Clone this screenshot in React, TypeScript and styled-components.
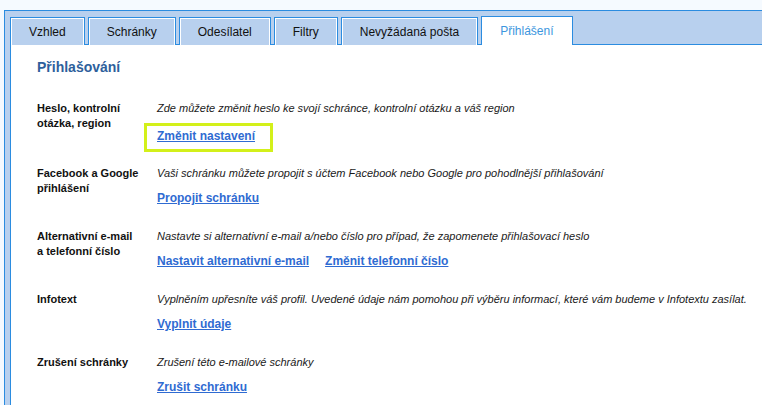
import React from "react";
import styled, { createGlobalStyle } from "styled-components";

const Global = createGlobalStyle`
  html, body { margin: 0; padding: 0; }
  body {
    background: #f5faff;
    font-family: Arial, "Liberation Sans", sans-serif;
    overflow: hidden;
  }
`;

const BLUE = "#2b8ce0";
const LIGHT = "#b8d0ee";

const Page = styled.div`
  padding: 10px 0 0 4px;
  height: 405px;
  box-sizing: border-box;
`;

const Frame = styled.div`
  border-top: 1px solid ${BLUE};
  border-left: 1px solid ${BLUE};
  background: ${LIGHT};
  padding: 5px 0 0 5px;
  height: 100%;
  box-sizing: border-box;
  display: flex;
  flex-direction: column;
`;

const TabBar = styled.div`
  display: flex;
  gap: 3px;
  align-items: flex-end;
  position: relative;
  z-index: 1;
  margin-bottom: -1px;
`;

const Tab = styled.div<{ $active?: boolean }>`
  height: 28px;
  box-sizing: border-box;
  padding: 0 18px;
  border: 1px solid ${BLUE};
  border-bottom: none;
  display: flex;
  align-items: center;
  font-size: 12px;
  color: ${(p) => (p.$active ? "#3c96de" : "#111")};
  background: ${(p) => (p.$active ? "#fff" : LIGHT)};
  box-shadow: ${(p) => (p.$active ? "none" : "inset 1px 1px 0 #fff, inset -1px 0 0 #fff")};
  white-space: nowrap;
  ${(p) => (p.$active ? "height: 29px; padding-bottom: 1px;" : "")}
`;

const Content = styled.div`
  flex: 1;
  background: #fff;
  border-top: 1px solid ${BLUE};
  border-left: 1px solid ${BLUE};
  padding: 14px 0 0 26px;
`;

const Heading = styled.h2`
  margin: 0 0 25px;
  font-size: 14px;
  line-height: 17px;
  font-weight: bold;
  color: #2e5f9c;
`;

const Row = styled.div<{ $gap: number }>`
  display: grid;
  grid-template-columns: 120px 1fr;
  margin-bottom: ${(p) => p.$gap}px;
`;

const Label = styled.div`
  font-size: 11px;
  line-height: 14.5px;
  font-weight: bold;
  color: #111;
`;

const Desc = styled.div`
  font-size: 11px;
  line-height: 14px;
  font-style: italic;
  color: #1a1a1a;
  white-space: nowrap;
`;

const Links = styled.div<{ $top: number }>`
  margin-top: ${(p) => p.$top}px;
  display: flex;
  gap: 16px;
  line-height: 16px;
`;

const Link = styled.a`
  font-size: 12px;
  font-weight: bold;
  color: #2f6bd2;
  text-decoration: underline;
  cursor: pointer;
`;

const Highlight = styled.span`
  position: relative;
  display: inline-block;
  &::after {
    content: "";
    position: absolute;
    left: -13px;
    right: -18px;
    top: -4px;
    bottom: -8px;
    border: 3px solid #d3f01a;
    pointer-events: none;
  }
`;

const tabs = ["Vzhled", "Schránky", "Odesílatel", "Filtry", "Nevyžádaná pošta", "Přihlášení"];

type Item = { label: string[]; desc: string; links: string[]; highlight?: boolean };

const items: Item[] = [
  {
    label: ["Heslo, kontrolní", "otázka, region"],
    desc: "Zde můžete změnit heslo ke svojí schránce, kontrolní otázku a váš region",
    links: ["Změnit nastavení"],
    highlight: true,
  },
  {
    label: ["Facebook a Google", "přihlášení"],
    desc: "Vaši schránku můžete propojit s účtem Facebook nebo Google pro pohodlnější přihlašování",
    links: ["Propojit schránku"],
  },
  {
    label: ["Alternativní e-mail", "a telefonní číslo"],
    desc: "Nastavte si alternativní e-mail a/nebo číslo pro případ, že zapomenete přihlašovací heslo",
    links: ["Nastavit alternativní e-mail", "Změnit telefonní číslo"],
  },
  {
    label: ["Infotext"],
    desc: "Vyplněním upřesníte váš profil. Uvedené údaje nám pomohou při výběru informací, které vám budeme v Infotextu zasílat.",
    links: ["Vyplnit údaje"],
  },
  {
    label: ["Zrušení schránky"],
    desc: "Zrušení této e-mailové schránky",
    links: ["Zrušit schránku"],
  },
];

export default function App() {
  return (
    <>
      <Global />
      <Page>
        <Frame>
          <TabBar>
            {tabs.map((t) => (
              <Tab key={t} $active={t === "Přihlášení"}>
                {t}
              </Tab>
            ))}
          </TabBar>
          <Content>
            <Heading>Přihlašování</Heading>
            {items.map((it, i) => (
              <Row key={i} $gap={it.highlight ? 22 : 23}>
                <Label>
                  {it.label.map((l, j) => (
                    <React.Fragment key={j}>
                      {j > 0 && <br />}
                      {l}
                    </React.Fragment>
                  ))}
                </Label>
                <div>
                  <Desc>{it.desc}</Desc>
                  <Links $top={it.highlight ? 12 : 10}>
                    {it.links.map((l) =>
                      it.highlight ? (
                        <Highlight key={l}>
                          <Link>{l}</Link>
                        </Highlight>
                      ) : (
                        <Link key={l}>{l}</Link>
                      )
                    )}
                  </Links>
                </div>
              </Row>
            ))}
          </Content>
        </Frame>
      </Page>
    </>
  );
}
